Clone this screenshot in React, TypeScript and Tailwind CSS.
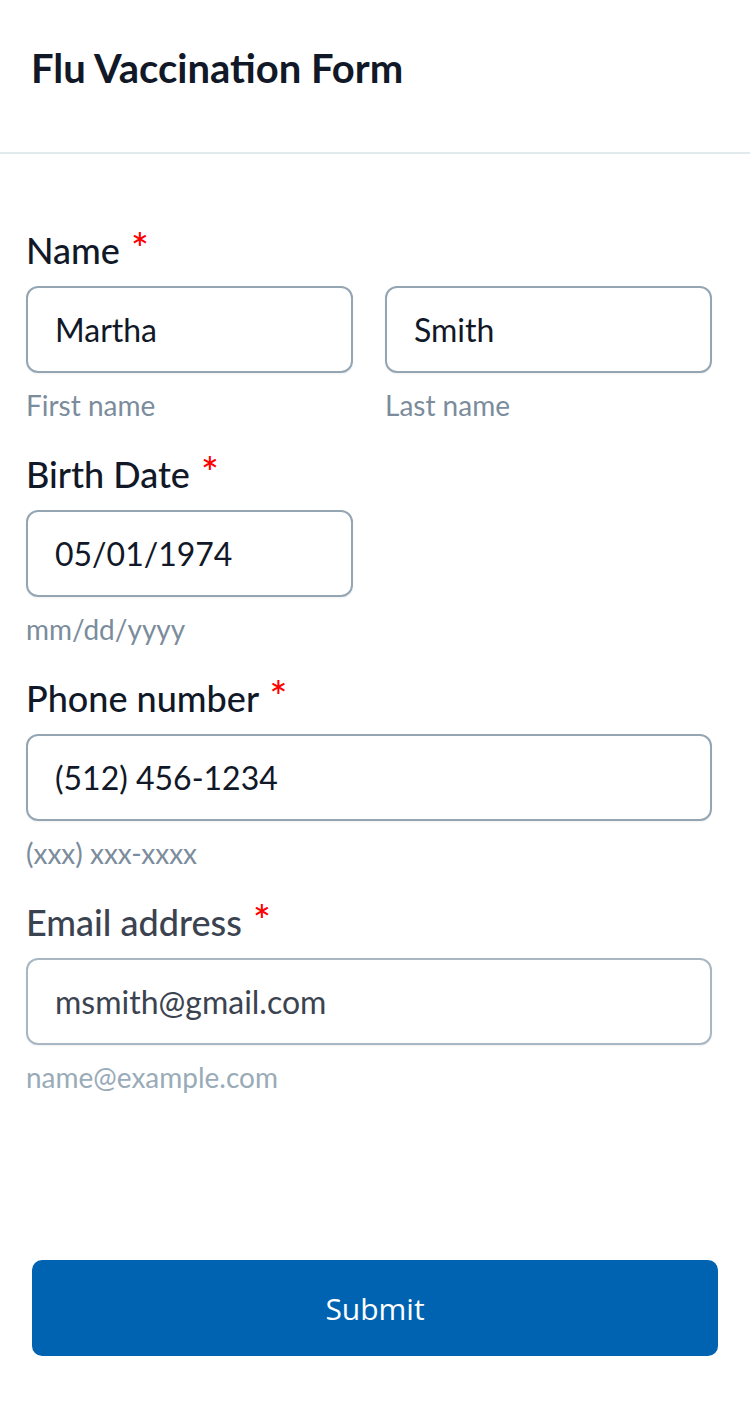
import React from "react";

type FieldProps = {
  label: string;
  value: string;
  hint: string;
  faded?: boolean;
};

function Req() {
  return (
    <span className="text-[#ff0000] text-[42px] leading-none ml-[2px]">*</span>
  );
}

function Field({ label, value, hint, faded }: FieldProps) {
  return (
    <div className="flex flex-col">
      <label
        className={`h-10 relative -top-[3px] text-[36px] leading-10 font-medium ${
          faded ? "text-[#3b4351]" : "text-[#111827]"
        }`}
      >
        {label} <Req />
      </label>
      <div
        className={`mt-4 h-[87px] flex items-center px-[27px] rounded-[12px] border-2 bg-white shadow-[0_1px_2px_rgba(0,0,0,0.06)] text-[32px] ${
          faded
            ? "border-[#a9b7c3] text-[#3b4351]"
            : "border-[#94a6b4] text-[#111827]"
        }`}
      >
        {value}
      </div>
      <p
        className={`mt-4 h-8 text-[28px] leading-8 ${
          faded ? "text-[#9aabb8]" : "text-[#7b8c9c]"
        }`}
      >
        {hint}
      </p>
    </div>
  );
}

export default function App() {
  return (
    <div
      className="w-[750px] h-[1422px] bg-white flex flex-col"
      style={{ fontFamily: "Lato, 'Noto Sans', sans-serif" }}
    >
      <header className="h-[154px] border-b-2 border-[#e3eaee] pt-[44px] px-[31px]">
        <h1 className="text-[40px] leading-[48px] font-bold text-[#111827]">
          Flu Vaccination Form
        </h1>
      </header>

      <form className="flex flex-col flex-1 pt-[76px] pl-[26px] pr-[38px]">
        <div className="flex flex-col gap-[33px]">
          <div className="flex flex-col">
            <label className="h-10 relative -top-[3px] text-[36px] leading-10 font-medium text-[#111827]">
              Name <Req />
            </label>
            <div className="mt-4 grid grid-cols-2 gap-[32px]">
              <div className="flex flex-col">
                <div className="h-[87px] flex items-center px-[27px] rounded-[12px] border-2 border-[#94a6b4] bg-white shadow-[0_1px_2px_rgba(0,0,0,0.06)] text-[32px] text-[#111827]">
                  Martha
                </div>
                <p className="mt-4 h-8 text-[28px] leading-8 text-[#7b8c9c]">First name</p>
              </div>
              <div className="flex flex-col">
                <div className="h-[87px] flex items-center px-[27px] rounded-[12px] border-2 border-[#94a6b4] bg-white shadow-[0_1px_2px_rgba(0,0,0,0.06)] text-[32px] text-[#111827]">
                  Smith
                </div>
                <p className="mt-4 h-8 text-[28px] leading-8 text-[#7b8c9c]">Last name</p>
              </div>
            </div>
          </div>

          <div className="w-[327px]">
            <Field label="Birth Date" value="05/01/1974" hint="mm/dd/yyyy" />
          </div>

          <Field label="Phone number" value="(512) 456-1234" hint="(xxx) xxx-xxxx" />

          <Field
            label="Email address"
            value="msmith@gmail.com"
            hint="name@example.com"
            faded
          />
        </div>

        <button
          type="button"
          className="mt-[167px] ml-[6px] w-[686px] h-[96px] rounded-[10px] bg-[#0063b2] text-white text-[30px]"
          style={{ fontFamily: "'Open Sans', 'Noto Sans', sans-serif" }}
        >
          Submit
        </button>
      </form>
    </div>
  );
}
